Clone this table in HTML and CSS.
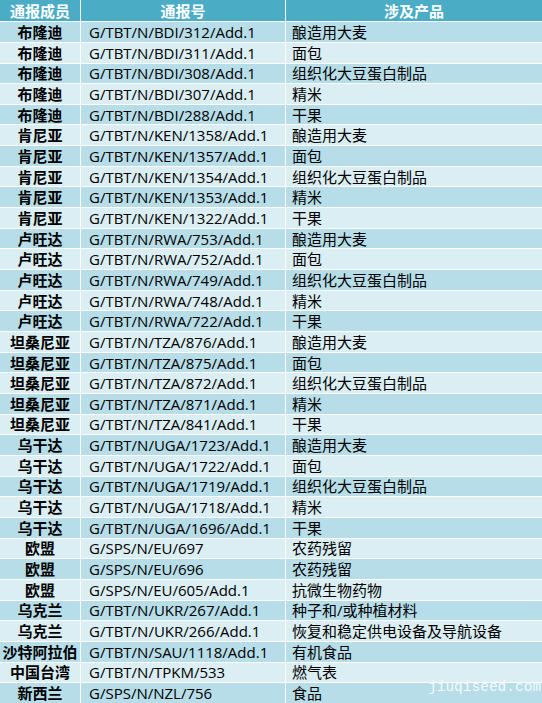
FILE: index.html
```html
<!DOCTYPE html>
<html lang="zh-CN">
<head>
<meta charset="utf-8">
<title>通报</title>
<link rel="stylesheet" href="styles.css">
</head>
<body>
<div class="wrap">
<div class="tbl">
<div class="row head"><div class="cell">通报成员</div><div class="cell">通报号</div><div class="cell">涉及产品</div></div>
<div class="row"><div class="cell m">布隆迪</div><div class="cell n">G/TBT/N/BDI/312/Add.1</div><div class="cell p">酿造用大麦</div></div>
<div class="row"><div class="cell m">布隆迪</div><div class="cell n">G/TBT/N/BDI/311/Add.1</div><div class="cell p">面包</div></div>
<div class="row"><div class="cell m">布隆迪</div><div class="cell n">G/TBT/N/BDI/308/Add.1</div><div class="cell p">组织化大豆蛋白制品</div></div>
<div class="row"><div class="cell m">布隆迪</div><div class="cell n">G/TBT/N/BDI/307/Add.1</div><div class="cell p">精米</div></div>
<div class="row"><div class="cell m">布隆迪</div><div class="cell n">G/TBT/N/BDI/288/Add.1</div><div class="cell p">干果</div></div>
<div class="row"><div class="cell m">肯尼亚</div><div class="cell n">G/TBT/N/KEN/1358/Add.1</div><div class="cell p">酿造用大麦</div></div>
<div class="row"><div class="cell m">肯尼亚</div><div class="cell n">G/TBT/N/KEN/1357/Add.1</div><div class="cell p">面包</div></div>
<div class="row"><div class="cell m">肯尼亚</div><div class="cell n">G/TBT/N/KEN/1354/Add.1</div><div class="cell p">组织化大豆蛋白制品</div></div>
<div class="row"><div class="cell m">肯尼亚</div><div class="cell n">G/TBT/N/KEN/1353/Add.1</div><div class="cell p">精米</div></div>
<div class="row"><div class="cell m">肯尼亚</div><div class="cell n">G/TBT/N/KEN/1322/Add.1</div><div class="cell p">干果</div></div>
<div class="row"><div class="cell m">卢旺达</div><div class="cell n">G/TBT/N/RWA/753/Add.1</div><div class="cell p">酿造用大麦</div></div>
<div class="row"><div class="cell m">卢旺达</div><div class="cell n">G/TBT/N/RWA/752/Add.1</div><div class="cell p">面包</div></div>
<div class="row"><div class="cell m">卢旺达</div><div class="cell n">G/TBT/N/RWA/749/Add.1</div><div class="cell p">组织化大豆蛋白制品</div></div>
<div class="row"><div class="cell m">卢旺达</div><div class="cell n">G/TBT/N/RWA/748/Add.1</div><div class="cell p">精米</div></div>
<div class="row"><div class="cell m">卢旺达</div><div class="cell n">G/TBT/N/RWA/722/Add.1</div><div class="cell p">干果</div></div>
<div class="row"><div class="cell m">坦桑尼亚</div><div class="cell n">G/TBT/N/TZA/876/Add.1</div><div class="cell p">酿造用大麦</div></div>
<div class="row"><div class="cell m">坦桑尼亚</div><div class="cell n">G/TBT/N/TZA/875/Add.1</div><div class="cell p">面包</div></div>
<div class="row"><div class="cell m">坦桑尼亚</div><div class="cell n">G/TBT/N/TZA/872/Add.1</div><div class="cell p">组织化大豆蛋白制品</div></div>
<div class="row"><div class="cell m">坦桑尼亚</div><div class="cell n">G/TBT/N/TZA/871/Add.1</div><div class="cell p">精米</div></div>
<div class="row"><div class="cell m">坦桑尼亚</div><div class="cell n">G/TBT/N/TZA/841/Add.1</div><div class="cell p">干果</div></div>
<div class="row"><div class="cell m">乌干达</div><div class="cell n">G/TBT/N/UGA/1723/Add.1</div><div class="cell p">酿造用大麦</div></div>
<div class="row"><div class="cell m">乌干达</div><div class="cell n">G/TBT/N/UGA/1722/Add.1</div><div class="cell p">面包</div></div>
<div class="row"><div class="cell m">乌干达</div><div class="cell n">G/TBT/N/UGA/1719/Add.1</div><div class="cell p">组织化大豆蛋白制品</div></div>
<div class="row"><div class="cell m">乌干达</div><div class="cell n">G/TBT/N/UGA/1718/Add.1</div><div class="cell p">精米</div></div>
<div class="row"><div class="cell m">乌干达</div><div class="cell n">G/TBT/N/UGA/1696/Add.1</div><div class="cell p">干果</div></div>
<div class="row"><div class="cell m">欧盟</div><div class="cell n">G/SPS/N/EU/697</div><div class="cell p">农药残留</div></div>
<div class="row"><div class="cell m">欧盟</div><div class="cell n">G/SPS/N/EU/696</div><div class="cell p">农药残留</div></div>
<div class="row"><div class="cell m">欧盟</div><div class="cell n">G/SPS/N/EU/605/Add.1</div><div class="cell p">抗微生物药物</div></div>
<div class="row"><div class="cell m">乌克兰</div><div class="cell n">G/TBT/N/UKR/267/Add.1</div><div class="cell p">种子和/或种植材料</div></div>
<div class="row"><div class="cell m">乌克兰</div><div class="cell n">G/TBT/N/UKR/266/Add.1</div><div class="cell p">恢复和稳定供电设备及导航设备</div></div>
<div class="row"><div class="cell m">沙特阿拉伯</div><div class="cell n">G/TBT/N/SAU/1118/Add.1</div><div class="cell p">有机食品</div></div>
<div class="row"><div class="cell m">中国台湾</div><div class="cell n">G/TBT/N/TPKM/533</div><div class="cell p">燃气表</div></div>
<div class="row"><div class="cell m">新西兰</div><div class="cell n">G/SPS/N/NZL/756</div><div class="cell p">食品</div></div>
</div>
<div class="mark">jiuqiseed.com</div>
</div>
</body>
</html>
```
FILE: styles.css
```css
html, body {
  margin: 0;
  padding: 0;
  background: #ffffff;
}
.wrap {
  position: relative;
  width: 542px;
  height: 703px;
  overflow: hidden;
}
.tbl {
  width: 542px;
  display: flex;
  flex-direction: column;
  row-gap: 1px;
  background: #ffffff;
  font-family: "Open Sans", "Noto Sans CJK SC", sans-serif;
  font-size: 15px;
  color: #000;
}
.row {
  display: grid;
  grid-template-columns: 80px 204px 1fr;
  column-gap: 1px;
  height: 19.66px;
  flex: none;
}
.row.head {
  height: 21.2px;
}
.cell {
  display: flex;
  align-items: center;
  white-space: nowrap;
  overflow: hidden;
  line-height: 18px;
}
.head .cell {
  background: #4bacc6;
  color: #ffffff;
  font-weight: bold;
  justify-content: center;
}
.cell.m {
  justify-content: center;
  font-weight: bold;
}
.cell.n { padding-left: 8px; }
.cell.p { padding-left: 6px; }
.row:nth-child(even) .cell { background: #b6dde8; }
.row:nth-child(odd):not(.head) .cell { background: #daeef3; }
.mark {
  position: absolute;
  left: 428px;
  top: 679px;
  font-family: "Liberation Mono", monospace;
  font-size: 14.5px;
  color: rgba(255, 255, 255, 0.88);
  white-space: nowrap;
}
```
